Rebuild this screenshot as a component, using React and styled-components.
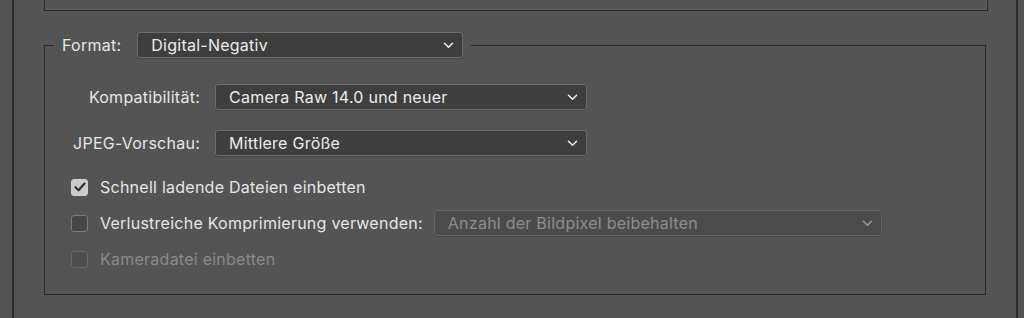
import React, { useState } from "react";
import styled, { createGlobalStyle } from "styled-components";

const GlobalStyle = createGlobalStyle`
  html, body {
    margin: 0;
    padding: 0;
    background: #545454;
  }
  body {
    font-family: Inter, "Noto Sans", "Liberation Sans", sans-serif;
    font-size: 16px;
    line-height: 18px;
    letter-spacing: 0.25px;
    color: #e6e6e6;
  }
`;

const Frame = styled.div`
  margin-left: 12px;
  width: 1006px;
  height: 318px;
  box-sizing: border-box;
  border-left: 2px solid #2c2c2c;
  border-right: 2px solid #2c2c2c;
  padding-left: 30px;
  overflow: hidden;
`;

const TopPanel = styled.div`
  width: 942px;
  height: 10px;
  border: 1px solid #2a2a2a;
  border-top: none;
  box-shadow: inset -1px -1px 0 rgba(255, 255, 255, 0.06);
`;

const Group = styled.fieldset`
  width: 942px;
  box-sizing: border-box;
  margin: 21px 0 0;
  padding: 0 0 26px;
  border: 1px solid #2a2a2a;
  min-inline-size: auto;
`;

const Legend = styled.legend`
  display: flex;
  align-items: center;
  gap: 16px;
  margin-left: 9px;
  padding: 0 8px;
`;

const Select = styled.div`
  display: flex;
  align-items: center;
  justify-content: space-between;
  box-sizing: border-box;
  width: ${(p) => p.$width}px;
  height: 26px;
  padding: 0 8px 0 13px;
  border-radius: 3px;
  border: 1px solid ${(p) => (p.$disabled ? "#626262" : "#6c6c6c")};
  background: ${(p) => (p.$disabled ? "#4b4b4b" : "#3e3e3e")};
  color: ${(p) => (p.$disabled ? "#8e8e8e" : "#ececec")};
  box-shadow: 0 1px 0 rgba(0, 0, 0, 0.15);
`;

const FormGrid = styled.div`
  display: grid;
  grid-template-columns: 155px 372px;
  column-gap: 15px;
  row-gap: 20px;
  align-items: center;
  margin-top: 26px;
`;

const Label = styled.span`
  text-align: right;
  white-space: nowrap;
  color: ${(p) => (p.$disabled ? "#8a8a8a" : "#e6e6e6")};
`;

const Options = styled.div`
  display: flex;
  flex-direction: column;
  gap: 14px;
  margin-top: 22px;
  padding-left: 26px;
`;

const OptionRow = styled.label`
  display: flex;
  align-items: center;
  min-height: 18px;
  gap: 12px;
  color: ${(p) => (p.$disabled ? "#8a8a8a" : "#e6e6e6")};
`;

const Box = styled.span`
  display: flex;
  align-items: center;
  justify-content: center;
  width: 17px;
  height: 17px;
  box-sizing: border-box;
  border-radius: 3px;
  border: 1px solid ${(p) => (p.$checked ? "#cfcfcf" : p.$disabled ? "#6a6a6a" : "#7c7c7c")};
  background: ${(p) => (p.$checked ? "#cacaca" : p.$disabled ? "#4e4e4e" : "#464646")};
  flex-shrink: 0;
`;

const Inline = styled.div`
  display: flex;
  align-items: center;
  gap: 11px;
`;

const Chevron = ({ color }) => (
  <svg width="11" height="7" viewBox="0 0 11 7" fill="none">
    <path d="M1.5 1.3 L5.5 5.2 L9.5 1.3" stroke={color} strokeWidth="1.6" strokeLinecap="round" strokeLinejoin="round" />
  </svg>
);

const Check = () => (
  <svg width="12" height="10" viewBox="0 0 12 10" fill="none">
    <path d="M1.5 5.2 L4.6 8.2 L10.5 1.6" stroke="#303030" strokeWidth="2.2" strokeLinecap="round" strokeLinejoin="round" />
  </svg>
);

const Dropdown = ({ value, width, disabled }) => (
  <Select $width={width} $disabled={disabled}>
    <span>{value}</span>
    <Chevron color={disabled ? "#9a9a9a" : "#f0f0f0"} />
  </Select>
);

const Checkbox = ({ checked, disabled }) => (
  <Box $checked={checked} $disabled={disabled}>
    {checked && <Check />}
  </Box>
);

export default function App() {
  const [fast, setFast] = useState(true);

  return (
    <>
      <GlobalStyle />
      <Frame>
        <TopPanel />
        <Group>
          <Legend>
            <span>Format:</span>
            <Dropdown value="Digital-Negativ" width={326} />
          </Legend>
          <FormGrid>
            <Label>Kompatibilität:</Label>
            <Dropdown value="Camera Raw 14.0 und neuer" width={372} />
            <Label>JPEG-Vorschau:</Label>
            <Dropdown value="Mittlere Größe" width={372} />
          </FormGrid>
          <Options>
            <OptionRow onClick={() => setFast(!fast)}>
              <Checkbox checked={fast} />
              <span>Schnell ladende Dateien einbetten</span>
            </OptionRow>
            <Inline>
              <OptionRow>
                <Checkbox />
                <span>Verlustreiche Komprimierung verwenden:</span>
              </OptionRow>
              <Dropdown value="Anzahl der Bildpixel beibehalten" width={448} disabled />
            </Inline>
            <OptionRow $disabled>
              <Checkbox disabled />
              <span>Kameradatei einbetten</span>
            </OptionRow>
          </Options>
        </Group>
      </Frame>
    </>
  );
}
